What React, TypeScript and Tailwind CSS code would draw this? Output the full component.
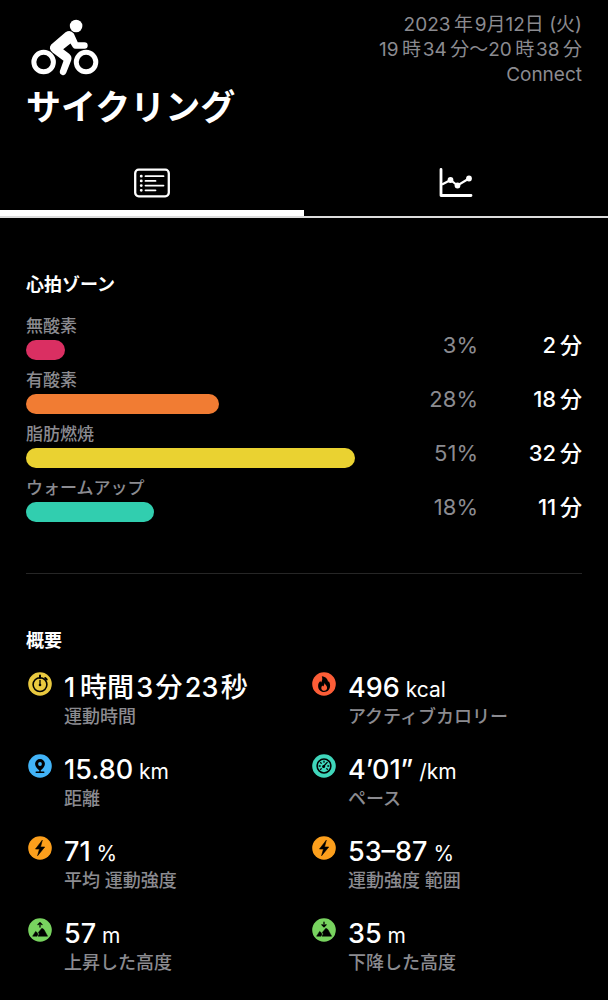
import { ReactNode } from "react";

const zones = [
  { name: "無酸素", percent: 3, minutes: 2, width: 12, color: "bg-[#da2f62]" },
  { name: "有酸素", percent: 28, minutes: 18, width: 58.6, color: "bg-[#f17c33]" },
  { name: "脂肪燃焼", percent: 51, minutes: 32, width: 100, color: "bg-[#ead231]" },
  { name: "ウォームアップ", percent: 18, minutes: 11, width: 38.8, color: "bg-[#31ceaf]" }
];

function Badge({ color, children }: { color: string; children: ReactNode }) {
  return (
    <svg viewBox="0 0 24 24" className="mt-1 h-6 w-6 shrink-0" aria-hidden="true">
      <circle cx="12" cy="12" r="11.8" fill={color} />
      {children}
    </svg>
  );
}

function TimerIcon() {
  return (
    <Badge color="#e9c93f">
      <circle cx="12" cy="12.6" r="6.9" fill="none" stroke="#000" strokeWidth="1.6" />
      <path d="M12 3.6v2.4M17.2 6l1.500 1.500" stroke="#000" strokeWidth="2" strokeLinecap="round" />
      <path d="M12 8.400v4" stroke="#000" strokeWidth="1.300" strokeLinecap="round" />
      <circle cx="12" cy="13" r="1.300" />
    </Badge>
  );
}

function FlameIcon() {
  return (
    <Badge color="#fc5d37">
      <path d="M9.800 4.200c4 .6 6.200 3 6.200 5.900.4-.3.600-.7.700-1.200 1 1.500 1.400 3.100 1.400 4.800 0 3.600-2.500 6.200-6 6.200s-6-2.500-6-6c0-2.300 1-3.700 2.200-4.900.2.700.4 1.100.8 1.500C10.300 8.600 10.700 6.400 9.800 4.200z" />
      <path d="M12.500 10.800c.2 1.700 2.600 2.700 2.600 5 0 1.800-1.300 3-2.900 3s-2.900-1.200-2.900-2.900c0-1 .5-1.800 1.100-2.400.2.500.4.8.8 1 .8-.9 1.300-2.200 1.300-3.700z" fill="#fc5d37" />
    </Badge>
  );
}

function PinIcon() {
  return (
    <Badge color="#42b4f8">
      <path d="M12 5.100a4.900 4.900 0 0 0-4.900 4.900c0 2.600 2.200 4.600 4.100 6.300h1.600c1.900-1.700 4.100-3.700 4.100-6.300A4.900 4.900 0 0 0 12 5.100z" />
      <circle cx="12" cy="10" r="1.900" fill="#42b4f8" />
      <path d="M12 15v3M8.200 18.200h7.600" stroke="#000" strokeWidth="1.400" strokeLinecap="round" />
    </Badge>
  );
}

function GaugeIcon() {
  return (
    <Badge color="#3fd6bb">
      <circle cx="12" cy="12" r="6.900" fill="none" stroke="#000" strokeWidth="1.500" />
      <path d="M12 7.200v1M8.600 8.600l.6.600M7.200 12h1M15.800 12h1M8.600 15.400l.6-.6M15.400 15.400l-.6-.6M11.500 12.500l3.700-4.100" stroke="#000" strokeWidth="1.300" strokeLinecap="round" />
      <circle cx="11.600" cy="12.600" r="1.500" />
    </Badge>
  );
}

function BoltIcon() {
  return (
    <Badge color="#fc9f1c">
      <path d="M14.300 4.200L7.500 13h4l-1.900 6.700L16.700 11h-4.200z" stroke="#000" strokeWidth=".6" strokeLinejoin="round" />
    </Badge>
  );
}

function MountainIcon({ down }: { down?: boolean }) {
  return (
    <Badge color="#78d35f">
      <path d="M4.600 18.200l3-4.800 1.400 1.100 1 1.700-1 2zM10 18.200l1.300-2.200-1-1.500 3.600-4.300 2 1.300L19.600 18.200z" stroke="#000" strokeWidth=".5" strokeLinejoin="round" />
      <path
        d={down ? "M12 4.200v4.200M10 6.800l2 2 2-2" : "M12 9V4.800M10 6.600l2-2 2 2"}
        fill="none"
        stroke="#000"
        strokeWidth="1.300"
        strokeLinecap="round"
        strokeLinejoin="round"
      />
    </Badge>
  );
}

// hair and thin spaces separate the digits from the kanji next to them
const stats = [
  { icon: <TimerIcon />, value: "1\u2009時間\u200a3\u200a分\u200a23\u200a秒", unit: "", label: "運動時間" },
  { icon: <FlameIcon />, value: "496", unit: "kcal", label: "アクティブカロリー" },
  { icon: <PinIcon />, value: "15.80", unit: "km", label: "距離" },
  { icon: <GaugeIcon />, value: "4’01”", unit: "/km", label: "ペース" },
  { icon: <BoltIcon />, value: "71", unit: "%", label: "平均 運動強度" },
  { icon: <BoltIcon />, value: "53–87", unit: "%", label: "運動強度 範囲" },
  { icon: <MountainIcon />, value: "57", unit: "m", label: "上昇した高度" },
  { icon: <MountainIcon down />, value: "35", unit: "m", label: "下降した高度" }
];

function CyclistIcon() {
  return (
    <svg viewBox="93 57 205 172" className="ml-[5px] h-[57px] w-[68px]" fill="#fff" aria-hidden="true">
      <circle cx="131" cy="187" r="29.5" fill="none" stroke="#fff" strokeWidth="15" />
      <circle cx="259" cy="187" r="29.5" fill="none" stroke="#fff" strokeWidth="15" />
      <circle cx="229" cy="78" r="19" />
      <path d="M154 134L197 97Q212 88 222 101L234 127H254A10 10 0 0 1 254 147H228Q222 147 219 142L212 131L190 148L208 162Q218 170 214 182L199 220A10 10 0 0 1 180 214L191 183L158 158Q144 146 154 134Z" />
    </svg>
  );
}

function ListIcon() {
  return (
    <svg viewBox="0 0 36 30" className="h-[30px] w-9" fill="none" stroke="#fff" strokeLinecap="round" aria-hidden="true">
      <rect x="1.200" y="1.700" width="33.600" height="26.600" rx="3.500" strokeWidth="2.300" />
      <path d="M11.500 8.200h18M11.500 12.900h10M11.500 17.600h18M11.500 22.300h10" strokeWidth="1.800" />
      <path d="M7.200 8.200h.1M7.200 12.900h.1M7.200 17.600h.1M7.200 22.300h.1" strokeWidth="2.800" />
    </svg>
  );
}

function ChartIcon() {
  return (
    <svg viewBox="0 0 34 30" className="h-[30px] w-[34px]" fill="none" stroke="#fff" aria-hidden="true">
      <path d="M2 1.500V27.500H32" strokeWidth="2.800" strokeLinecap="round" strokeLinejoin="round" />
      <path d="M3 16.500L11.500 12L18.500 17.500L30 10.500" strokeWidth="2.200" />
      <g fill="#fff" stroke="none">
        <circle cx="11.500" cy="12" r="2.900" />
        <circle cx="18.500" cy="17.500" r="2.900" />
        <circle cx="30" cy="10.500" r="2.900" />
      </g>
    </svg>
  );
}

export default function App() {
  return (
    <div className="min-h-screen bg-black font-['Inter','Noto_Sans_CJK_JP',sans-serif] text-white">
      <header className="flex justify-between px-[26px] pt-3">
        <div className="pt-[7px]">
          <CyclistIcon />
          <h1 className="mt-2 text-[35px] leading-[46px] font-bold">サイクリング</h1>
        </div>
        <div className="text-right text-[19px] leading-[25px] text-[#8b8b90]">
          <p>2023{"\u2009"}年{"\u200a"}9月12日 (火)</p>
          <p>19{"\u2009"}時{"\u200a"}34{"\u2009"}分〜20{"\u2009"}時{"\u200a"}38{"\u2009"}分</p>
          <p>Connect</p>
        </div>
      </header>

      <nav className="mt-[22px] grid grid-cols-2 border-b-2 border-[#dcdcdc]">
        <button aria-label="詳細" className="flex h-16 items-start justify-center border-b-[6px] border-white pt-4">
          <ListIcon />
        </button>
        <button aria-label="グラフ" className="flex h-16 items-start justify-center pt-4">
          <ChartIcon />
        </button>
      </nav>

      <main className="px-[26px]">
        <section className="border-b border-[#262626] pt-[55px] pb-[51px]">
          <h2 className="text-lg leading-6 font-bold">心拍ゾーン</h2>
          <div className="mt-4 flex flex-col gap-[7px]">
            {zones.map((zone) => (
              <div key={zone.name} className="flex items-end">
                <div className="flex-1">
                  <p className="pt-px text-[17px] leading-6 font-medium text-[#8b8b90]">{zone.name}</p>
                  <div className={`mt-[2px] h-5 rounded-full ${zone.color}`} style={{ width: `${zone.width}%` }} />
                </div>
                <p className="w-[123px] text-right text-[22px] leading-[30px] text-[#8b8b90]">{zone.percent}%</p>
                <p className="w-[104px] text-right text-[22px] leading-[30px] font-medium">{zone.minutes}{"\u2009"}分</p>
              </div>
            ))}
          </div>
        </section>

        <section className="pt-[55px] pb-6">
          <h2 className="text-lg leading-6 font-bold">概要</h2>
          <div className="mt-[15px] grid grid-cols-2 gap-x-3 gap-y-5">
            {stats.map((stat) => (
              <div key={stat.label} className="flex gap-3 pl-[2px]">
                {stat.icon}
                <div className="whitespace-nowrap">
                  <p className="pt-1 text-[27px] leading-8 font-medium">
                    {stat.value}
                    {stat.unit && <span className="text-[21px] leading-none font-normal"> {stat.unit}</span>}
                  </p>
                  <p className="text-lg leading-[26px] font-medium text-[#8b8b90]">{stat.label}</p>
                </div>
              </div>
            ))}
          </div>
        </section>
      </main>
    </div>
  );
}
